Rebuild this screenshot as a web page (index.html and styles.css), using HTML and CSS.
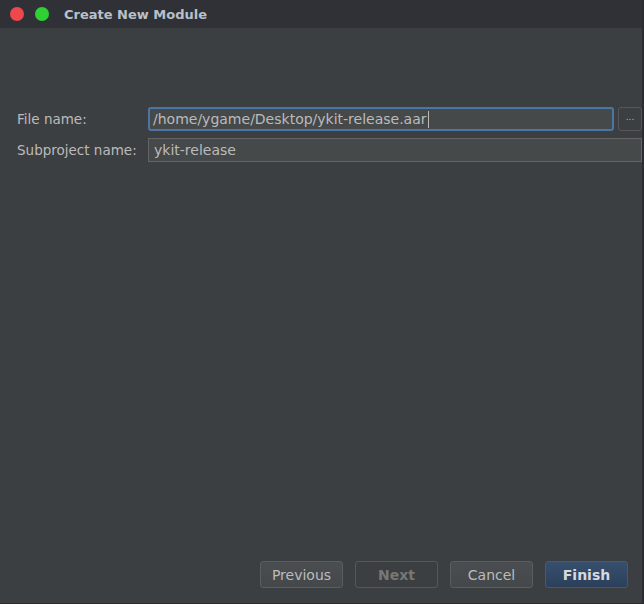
FILE: index.html
```html
<!DOCTYPE html>
<html>
<head>
<meta charset="utf-8">
<link rel="stylesheet" href="styles.css">
</head>
<body>
<div class="window">
  <div class="titlebar">
    <span class="dot dot-red"></span>
    <span class="dot dot-green"></span>
    <span class="title">Create New Module</span>
  </div>
  <div class="content">
    <div class="form">
      <div class="row">
        <label class="label">File name:</label>
        <div class="field focused"><span>/home/ygame/Desktop/ykit-release.aar</span><span class="caret"></span></div>
        <button class="browse">...</button>
      </div>
      <div class="row">
        <label class="label">Subproject name:</label>
        <div class="field wide"><span>ykit-release</span></div>
      </div>
    </div>
    <div class="buttons">
      <button class="btn">Previous</button>
      <button class="btn disabled">Next</button>
      <button class="btn">Cancel</button>
      <button class="btn primary">Finish</button>
    </div>
  </div>
</div>
</body>
</html>
```

FILE: styles.css
```css
* { box-sizing: border-box; }
html, body {
  margin: 0;
  padding: 0;
  background: #3c3f41;
  width: 644px;
  height: 604px;
  overflow: hidden;
  font-family: "DejaVu Sans", "Open Sans", sans-serif;
}
.window {
  width: 644px;
  height: 604px;
  display: flex;
  flex-direction: column;
  border-right: 2px solid #2a2c31;
  border-bottom: 1px solid #2a2c31;
  background: #3c3f41;
}
.titlebar {
  height: 28px;
  background: #2f3136;
  display: flex;
  align-items: center;
  padding-left: 10px;
  flex-shrink: 0;
}
.dot {
  width: 14px;
  height: 14px;
  border-radius: 50%;
  display: inline-block;
}
.dot-red { background: #f0474e; }
.dot-green { background: #2fd033; margin-left: 11px; }
.title {
  margin-left: 15px;
  color: #b9c0cb;
  font-weight: bold;
  font-size: 13px;
}
.content {
  flex: 1;
  display: flex;
  flex-direction: column;
  justify-content: space-between;
  padding: 79px 0 15px 0;
}
.form {
  display: flex;
  flex-direction: column;
  gap: 7px;
}
.row {
  display: flex;
  align-items: center;
  height: 24px;
}
.label {
  width: 148px;
  padding-left: 17px;
  color: #bbbbbb;
  font-size: 13.5px;
  flex-shrink: 0;
}
.field {
  height: 24px;
  background: #45494a;
  border: 1px solid #646464;
  color: #bbbbbb;
  font-size: 14px;
  display: flex;
  align-items: center;
  padding-left: 5px;
  white-space: nowrap;
}
.field.focused {
  width: 466px;
  border: 2px solid #4a75a5;
  border-radius: 3px;
  padding-left: 3px;
}
.field.wide { width: 494px; }
.caret {
  display: inline-block;
  width: 1px;
  height: 17px;
  background: #bbbbbb;
  margin-left: 1px;
}
.browse {
  margin-left: 4px;
  width: 24px;
  height: 24px;
  background: #3c3f41;
  border: 1px solid #555759;
  border-radius: 3px;
  color: #bbbbbb;
  font-size: 9px;
  padding: 0 0 4px 0;
  font-family: "DejaVu Sans", sans-serif;
}
.buttons {
  display: flex;
  justify-content: flex-end;
  gap: 12px;
  padding-right: 14px;
}
.btn {
  width: 83px;
  height: 27px;
  background: linear-gradient(#4a4e51, #44484a);
  border: 1px solid #5b5e60;
  border-radius: 3px;
  color: #bbbbbb;
  font-size: 14px;
  font-family: "DejaVu Sans", "Open Sans", sans-serif;
  padding: 0;
}
.btn.disabled {
  background: #3c3f41;
  border-color: #555759;
  color: #777777;
  font-weight: bold;
}
.btn.primary {
  background: linear-gradient(#37506f, #2b3f5a);
  border-color: #445a73;
  color: #d6d9de;
  font-weight: bold;
}
```
